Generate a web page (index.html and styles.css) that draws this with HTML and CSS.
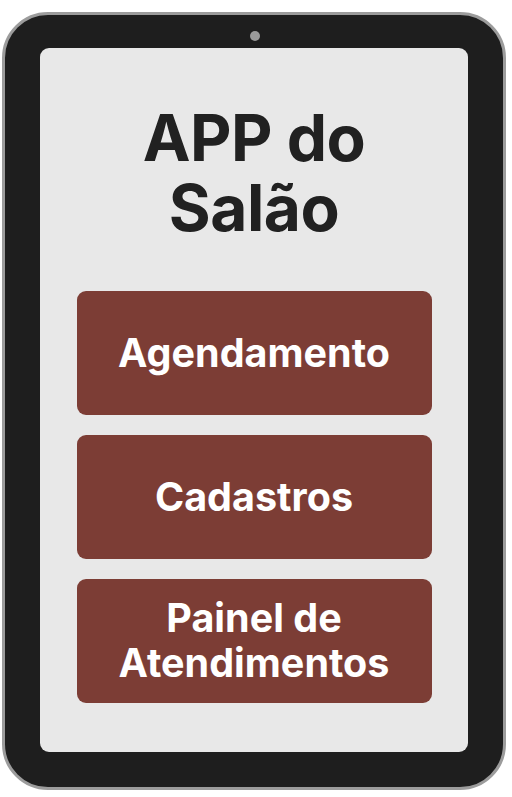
FILE: index.html
```html
<!DOCTYPE html>
<html lang="pt">
<head>
<meta charset="utf-8">
<title>APP do Salão</title>
<link rel="stylesheet" href="styles.css">
</head>
<body>
<div class="tablet">
  <div class="camera"></div>
  <div class="screen">
    <h1 class="title">APP do<br>Salão</h1>
    <div class="menu">
      <button class="btn">Agendamento</button>
      <button class="btn">Cadastros</button>
      <button class="btn">Painel de<br>Atendimentos</button>
    </div>
  </div>
</div>
</body>
</html>
```
FILE: styles.css
```css
html, body {
  margin: 0;
  padding: 0;
  background: #ffffff;
}
body {
  width: 512px;
  height: 797px;
  padding: 12px 0 0 2px;
  box-sizing: border-box;
  font-family: Inter, "Liberation Sans", sans-serif;
}
.tablet {
  position: relative;
  width: 504px;
  height: 778px;
  box-sizing: border-box;
  background: #1e1e1e;
  border: 3px solid #9c9c9c;
  border-radius: 46px;
  padding: 33px 35px 35px 35px;
}
.camera {
  position: absolute;
  left: 245px;
  top: 16px;
  width: 10px;
  height: 10px;
  border-radius: 50%;
  background: #9a9a9a;
}
.screen {
  width: 428px;
  height: 704px;
  background: #e8e8e8;
  border-radius: 9px;
  display: flex;
  flex-direction: column;
  align-items: center;
  box-sizing: border-box;
  padding-top: 55px;
}
.title {
  margin: 0;
  font-size: 64px;
  line-height: 70px;
  font-weight: 700;
  color: #212121;
  text-align: center;
  letter-spacing: -0.5px;
}
.menu {
  margin-top: 48px;
  display: flex;
  flex-direction: column;
  gap: 20px;
}
.btn {
  width: 355px;
  height: 124px;
  border: none;
  border-radius: 9px;
  background: #7c3d35;
  color: #ffffff;
  font-family: Inter, "Liberation Sans", sans-serif;
  font-weight: 700;
  font-size: 39.5px;
  line-height: 45px;
  text-align: center;
  padding: 0;
}
```
